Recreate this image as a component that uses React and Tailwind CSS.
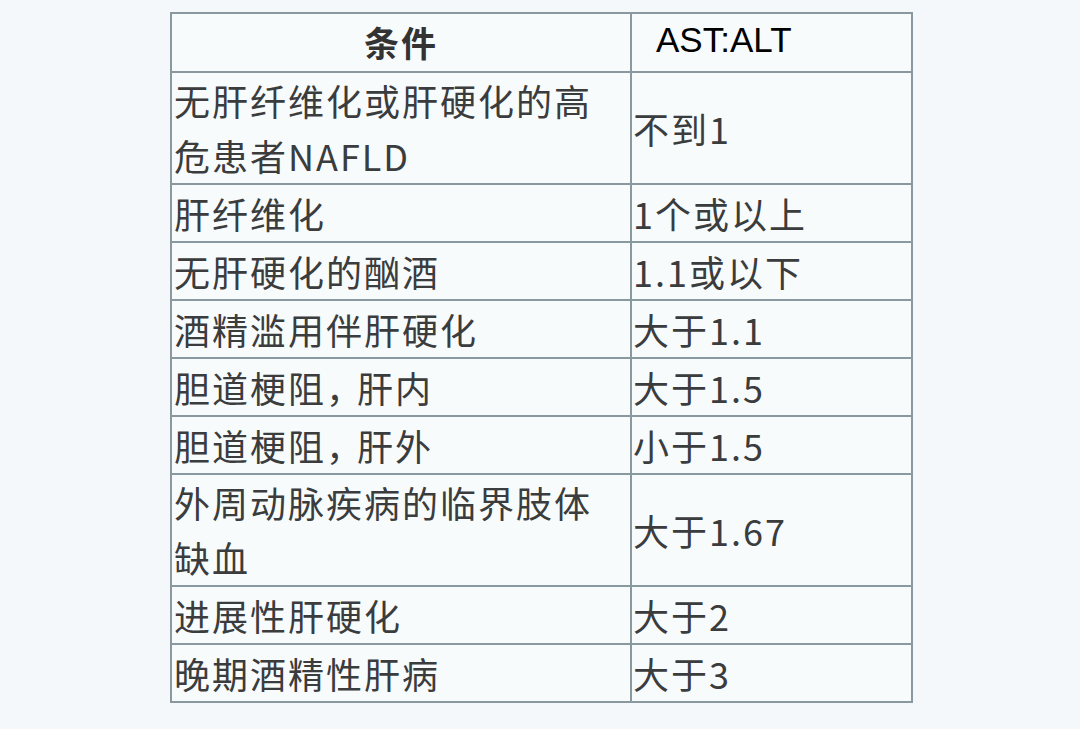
const rows = [
  { cond: "无肝纤维化或肝硬化的高危患者NAFLD", ratio: "不到1", tall: true },
  { cond: "肝纤维化", ratio: "1个或以上" },
  { cond: "无肝硬化的酗酒", ratio: "1.1或以下" },
  { cond: "酒精滥用伴肝硬化", ratio: "大于1.1" },
  { cond: "胆道梗阻，肝内", ratio: "大于1.5" },
  { cond: "胆道梗阻，肝外", ratio: "小于1.5" },
  { cond: "外周动脉疾病的临界肢体缺血", ratio: "大于1.67", tall: true },
  { cond: "进展性肝硬化", ratio: "大于2" },
  { cond: "晚期酒精性肝病", ratio: "大于3" },
];

// the source image sets the comma a little narrower than a full-width cell
const renderCond = (text) => {
  const parts = text.split("，");
  if (parts.length === 1) return text;
  return (
    <>
      {parts[0]}
      <span className="tracking-[-5px]">，</span>
      {parts[1]}
    </>
  );
};

const App = () => {
  return (
    <div
      className="min-h-[729px] w-[1080px] bg-[#f5f8fa] pt-[12px] pl-[170px] text-[#3a3c3d]"
      style={{ fontFamily: '"Noto Sans CJK SC", "Noto Sans", sans-serif' }}
    >
      <div className="w-[743px] border-2 border-[#8a98a0] bg-[#f8fbfc]">
        {/* HEADER */}
        <div className="grid grid-cols-[460px_1fr] h-[57px]">
          <div className="border-r-2 border-[#8a98a0] flex items-center justify-center text-[35px] font-bold tracking-[2px] text-[#333]">
            条件
          </div>
          <div
            className="flex items-center pl-[24px] pb-[4px] text-[35px] text-black"
            style={{ fontFamily: '"Liberation Sans", Arial, sans-serif' }}
          >
            AST:ALT
          </div>
        </div>

        {/* ROWS */}
        {rows.map((r) => (
          <div
            key={r.cond}
            className={`grid grid-cols-[460px_1fr] border-t-2 border-[#8a98a0] ${
              r.tall ? "h-[112px]" : "h-[58px]"
            }`}
          >
            <div className="border-r-2 border-[#8a98a0] pl-[2px] pr-[20px] text-[36px] leading-[55px] tracking-[2px] flex items-center">
              <span className="block">{renderCond(r.cond)}</span>
            </div>
            <div className="flex items-center pl-[1px] text-[36px] tracking-[2px]">
              {r.ratio}
            </div>
          </div>
        ))}
      </div>
    </div>
  );
};

export default App;
